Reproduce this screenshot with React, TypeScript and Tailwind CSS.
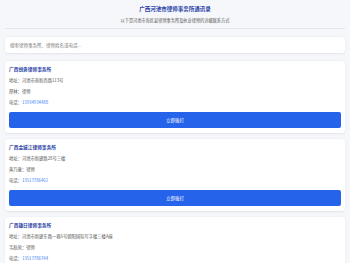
import React from "react";

const firms = [
  { name: "广西锐勇律师事务所", addr: "地址：河池市南新西路113号", lawyer: "邢林：律师", phone: "13934934488" },
  { name: "广西金城江律师事务所", addr: "地址：河池市新建路28号三楼", lawyer: "黄乃康：律师", phone: "13517786461" },
  { name: "广西雄日律师事务所", addr: "地址：河池市新建东路一巷6号朝阳国际写字楼三楼A座", lawyer: "韦秋凤：律师", phone: "13517786744" },
];

export default function App() {
  return (
    <div
      className="min-h-[263px] bg-[#f5f7fa] px-[5px] pt-[5px]"
      style={{ fontFamily: '"Noto Sans CJK SC", "Noto Sans", sans-serif' }}
    >
      <div className="flex flex-col items-center border-b border-[#e5e7eb] pb-[5px]">
        <div className="h-[8px] text-[5.5px] leading-[8px] font-bold text-[#2a3fa6]">广西河池市律师事务所通讯录</div>
        <div className="mt-[4px] h-[6px] text-[4.2px] leading-[6px] text-[#555]">以下是河池市各区县律师事务所及执业律师的详细联系方式</div>
      </div>
      <div className="mt-[8px] flex h-[16px] items-center rounded-[3px] bg-white px-[5px] shadow-[0_0.5px_2px_rgba(0,0,0,0.08)]">
        <span className="text-[4.5px] leading-[6px] text-[#777]">搜索律师事务所、律师姓名或电话...</span>
      </div>
      <div className="mt-[8px] flex flex-col gap-[6px]">
        {firms.map((f) => (
          <div key={f.name} className="rounded-[3px] bg-white px-[4px] pt-[4px] pb-[5px] shadow-[0_0.5px_2px_rgba(0,0,0,0.08)]">
            <div className="flex h-[10px] items-center text-[4.7px] font-bold text-[#2a3fa6]">{f.name}</div>
            <div className="flex h-[11px] items-center text-[4.3px] text-[#555]">{f.addr}</div>
            <div className="flex h-[11px] items-center text-[4.3px] text-[#555]">{f.lawyer}</div>
            <div className="flex h-[11px] items-center text-[4.3px] text-[#555]">
              电话：<span className="text-[#3b82f6]">{f.phone}</span>
            </div>
            <div className="mt-[4px] flex h-[16px] items-center justify-center rounded-[2px] bg-[#2563eb] text-[4.5px] text-white">
              立即拨打
            </div>
          </div>
        ))}
      </div>
    </div>
  );
}
